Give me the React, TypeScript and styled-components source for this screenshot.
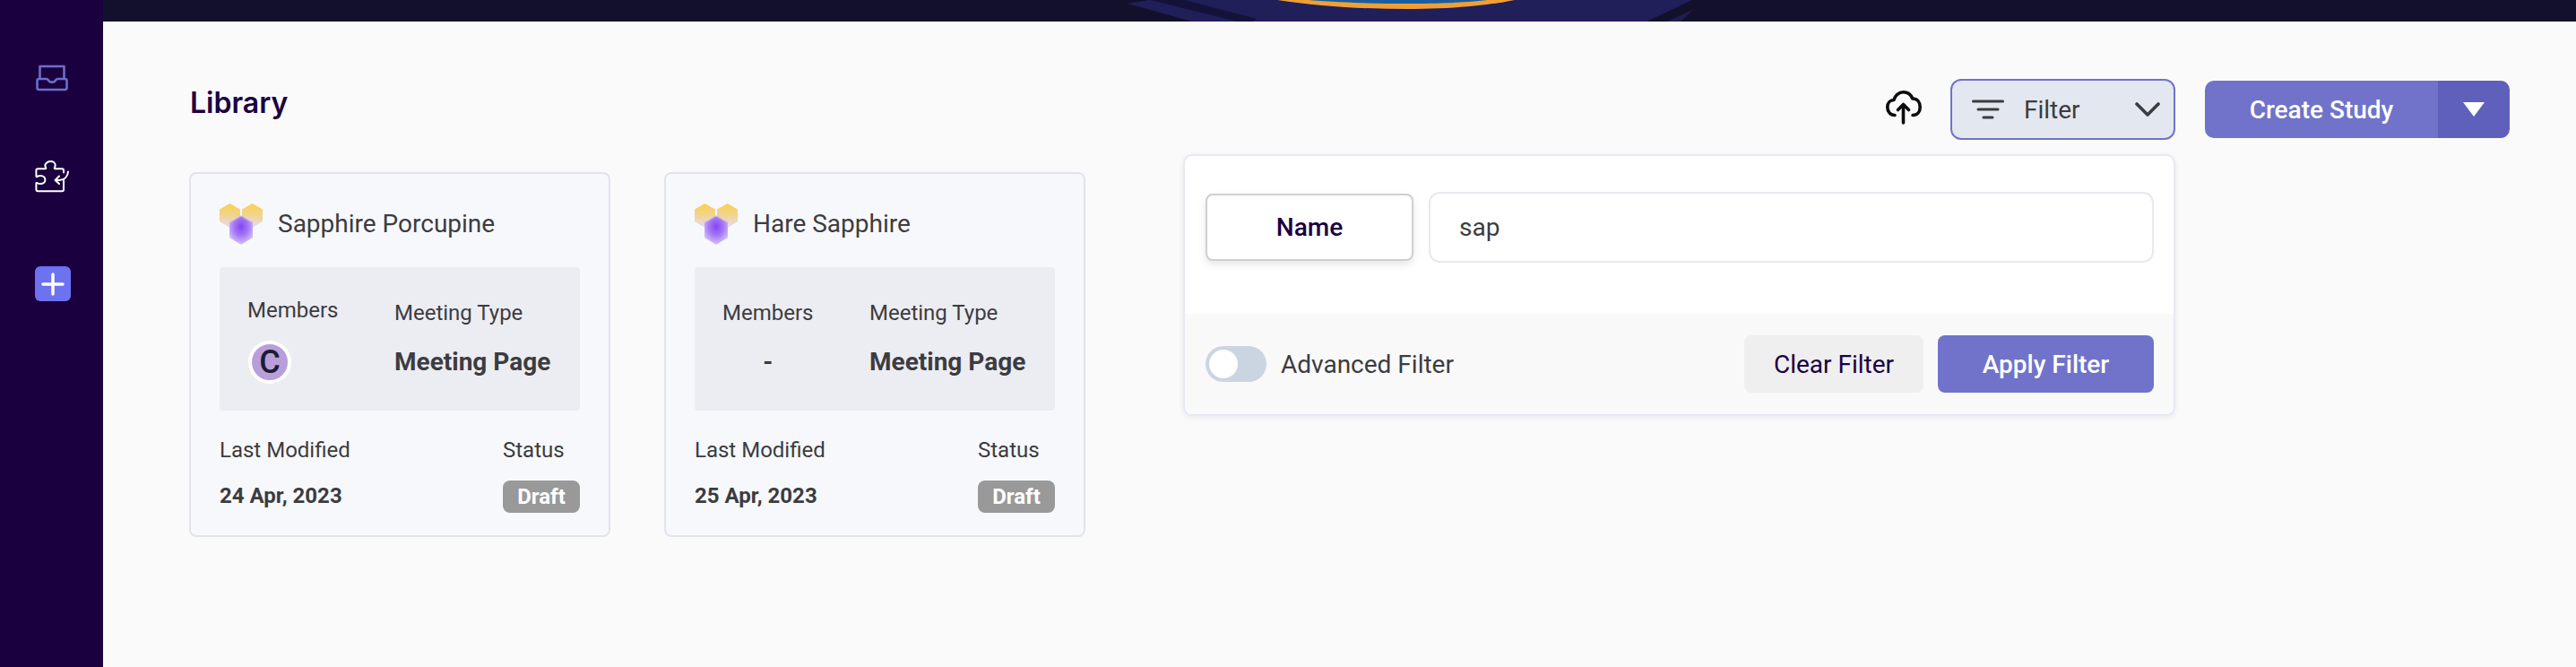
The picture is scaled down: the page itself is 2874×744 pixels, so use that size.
import React from "react";
import styled, { createGlobalStyle } from "styled-components";

const Global = createGlobalStyle`
  html, body { margin: 0; padding: 0; background: #fafafb; }
  * { box-sizing: border-box; }
  body { font-family: "Roboto", "Liberation Sans", sans-serif; color: #3c3c40; overflow: hidden; }
`;

const Page = styled.div`
  display: flex;
  width: 2874px;
  height: 744px;
  background: #fafafb;
`;

const Sidebar = styled.nav`
  flex: 0 0 115px;
  height: 744px;
  background: #1b003f;
  display: flex;
  flex-direction: column;
  align-items: center;
  padding-top: 72px;
`;

const NavItem = styled.div<{ $h: number; $mb: number }>`
  height: ${(p) => p.$h}px;
  margin-bottom: ${(p) => p.$mb}px;
  display: flex;
  align-items: center;
  justify-content: center;
`;

const PlusBox = styled.div`
  width: 40px;
  height: 39px;
  border-radius: 6px;
  background: #6c72f0;
  display: flex;
  align-items: center;
  justify-content: center;
  margin-right: -2px;
`;

const Main = styled.main`
  flex: 1;
  display: flex;
  flex-direction: column;
  min-width: 0;
`;

const Banner = styled.svg`
  display: block;
  width: 2759px;
  height: 24px;
  flex: 0 0 24px;
`;

const Content = styled.div`
  padding: 64px 74px 0 96px;
`;

const HeaderRow = styled.div`
  display: flex;
  justify-content: space-between;
  height: 68px;
`;

const Title = styled.h1`
  margin: 8px 0 0 1px;
  font-family: "Inter", "Liberation Sans", sans-serif;
  font-size: 32px;
  line-height: 38px;
  font-weight: 600;
  color: #1b0041;
`;

const Toolbar = styled.div`
  display: flex;
  align-items: center;
`;

const UploadButton = styled.div`
  width: 40px;
  height: 38px;
  margin-right: 32px;
  margin-top: -4px;
`;

const FilterWrap = styled.div`
  position: relative;
  margin-right: 33px;
`;

const FilterButton = styled.div`
  width: 251px;
  height: 68px;
  border: 2px solid #7073c9;
  border-radius: 12px;
  background: #e3e7ef;
  display: flex;
  align-items: center;
  padding: 0 15px 0 22px;
  font-size: 28px;
  color: #3c3c40;
`;

const FilterLabel = styled.span`
  flex: 1;
  margin-left: 22px;
`;

const Split = styled.div`
  display: flex;
  height: 64px;
  width: 340px;
  border-radius: 10px;
  overflow: hidden;
  color: #fff;
`;

const SplitMain = styled.div`
  flex: 1;
  background: #7073c9;
  display: flex;
  align-items: center;
  justify-content: center;
  font-size: 28px;
  font-weight: 500;
`;

const SplitCaret = styled.div`
  flex: 0 0 80px;
  background: #5e60bc;
  display: flex;
  align-items: center;
  justify-content: center;
`;

const Dropdown = styled.div`
  position: absolute;
  top: calc(100% + 16px);
  right: 0;
  width: 1107px;
  height: 292px;
  border: 2px solid #e6e9f1;
  border-radius: 10px;
  background: #fff;
  overflow: hidden;
  box-shadow: 0 2px 6px rgba(30, 40, 80, 0.08);
  display: flex;
  flex-direction: column;
`;

const DropdownBody = styled.div`
  height: 176px;
  padding: 40px 22px 0 23px;
  display: flex;
  align-items: flex-start;
  gap: 17px;
`;

const NameChip = styled.div`
  width: 232px;
  height: 75px;
  margin-top: 2px;
  border: 2px solid #cfcfd2;
  border-radius: 8px;
  background: #fff;
  box-shadow: 0 4px 10px rgba(0, 0, 0, 0.1);
  display: flex;
  align-items: center;
  justify-content: center;
  font-size: 28px;
  font-weight: 500;
  color: #1b0041;
`;

const NameField = styled.div`
  flex: 1;
  height: 79px;
  border: 2px solid #e6e9f1;
  border-radius: 12px;
  background: #fff;
  display: flex;
  align-items: center;
  padding-left: 32px;
  font-size: 28px;
  color: #3c3c40;
`;

const DropdownFooter = styled.div`
  flex: 1;
  background: #f9f9fa;
  display: flex;
  align-items: center;
  padding: 0 22px 0 23px;
`;

const ToggleTrack = styled.div`
  width: 68px;
  height: 40px;
  border-radius: 20px;
  background: #cbd5e1;
  padding: 4px;
`;

const ToggleKnob = styled.div`
  width: 32px;
  height: 32px;
  border-radius: 50%;
  background: #fff;
`;

const ToggleLabel = styled.span`
  margin-left: 16px;
  flex: 1;
  font-size: 28px;
  color: #3c3c40;
`;

const FooterButton = styled.div<{ $primary?: boolean }>`
  width: ${(p) => (p.$primary ? 241 : 200)}px;
  height: 64px;
  margin-left: ${(p) => (p.$primary ? 16 : 0)}px;
  border-radius: 8px;
  background: ${(p) => (p.$primary ? "#7073c9" : "#efeff0")};
  color: ${(p) => (p.$primary ? "#fff" : "#1b0041")};
  font-weight: ${(p) => (p.$primary ? 500 : 400)};
  display: flex;
  align-items: center;
  justify-content: center;
  font-size: 28px;
`;

const CardRow = styled.div`
  display: flex;
  gap: 60px;
  margin-top: 36px;
`;

const Card = styled.article`
  width: 470px;
  height: 407px;
  border: 2px solid #e3e4ea;
  border-radius: 8px;
  background: #f7f8fc;
  padding: 33px 32px 0;
`;

const CardHead = styled.div`
  display: flex;
  align-items: center;
  height: 46px;
  gap: 17px;
`;

const CardName = styled.div`
  font-size: 28px;
  line-height: 46px;
  color: #3c3c40;
`;

const InfoPanel = styled.div`
  margin-top: 25px;
  height: 160px;
  border-radius: 4px;
  background: #ecedf2;
  padding: 0 0 0 31px;
  display: grid;
  grid-template-columns: 164px 1fr;
`;

const InfoCol = styled.div<{ $center?: boolean }>`
  display: inline-flex;
  flex-direction: column;
  align-items: ${(p) => (p.$center ? "center" : "flex-start")};
  justify-self: start;
`;

const InfoLabel = styled.div<{ $top: number }>`
  margin-top: ${(p) => p.$top}px;
  height: 34px;
  line-height: 34px;
  font-size: 24px;
  color: #3c3c40;
`;

const InfoValue = styled.div<{ $top: number }>`
  margin-top: ${(p) => p.$top}px;
  height: 40px;
  line-height: 40px;
  font-size: 28px;
  font-weight: 700;
  color: #3c3c40;
`;

const Avatar = styled.div`
  width: 48px;
  height: 48px;
  margin-top: 17px;
  margin-left: 1px;
  border-radius: 50%;
  border: 4px solid #fff;
  background: #b99edc;
  color: #1d1d30;
  font-size: 36px;
  font-weight: 500;
  line-height: 40px;
  text-align: center;
`;

const MetaRow = styled.div`
  margin-top: 27px;
  display: flex;
  justify-content: space-between;
`;

const MetaColumn = styled.div`
  display: flex;
  flex-direction: column;
  align-items: flex-start;
`;

const MetaLabel = styled.div`
  font-size: 24px;
  line-height: 34px;
  color: #3c3c40;
`;

const MetaDate = styled.div`
  margin-top: 17px;
  font-size: 24px;
  line-height: 34px;
  font-weight: 700;
  color: #3c3c40;
`;

const Badge = styled.div`
  margin-top: 17px;
  width: 86px;
  height: 36px;
  border-radius: 8px;
  background: #999999;
  color: #fff;
  font-size: 24px;
  font-weight: 700;
  line-height: 36px;
  text-align: center;
`;

const HexLogo = ({ id }: { id: string }) => (
  <svg width="48" height="46" viewBox="0 0 48 46">
    <defs>
      <linearGradient id={`${id}-y`} x1="0" y1="0" x2="0" y2="1">
        <stop offset="0" stopColor="#fbd04e" />
        <stop offset="0.45" stopColor="#f1d48a" />
        <stop offset="1" stopColor="#e6daf5" />
      </linearGradient>
      <radialGradient id={`${id}-p`} cx="0.5" cy="0.38" r="0.65">
        <stop offset="0" stopColor="#8443f6" />
        <stop offset="0.5" stopColor="#a67bf5" />
        <stop offset="1" stopColor="#dccbf8" />
      </radialGradient>
    </defs>
    <path d="M11.5 0 23 6.5V20L11.5 27 0 20V6.5Z" fill={`url(#${id}-y)`} />
    <path d="M36.5 0 48 6.5V20L36.5 27 25 20V6.5Z" fill={`url(#${id}-y)`} />
    <path d="M24 13.5 37 21V38L24 46 11 38V21Z" fill={`url(#${id}-p)`} />
    <path d="M24 13.5 37 21 36 21.5 24 14.5 12 21.5 11 21Z" fill="#cdb6e9" />
  </svg>
);

const InboxIcon = () => (
  <svg width="36" height="30" viewBox="0 0 36 30" fill="none" stroke="#6b6fc9" strokeWidth="2.6" strokeLinejoin="round">
    <path d="M4.5 16V2h27v14" />
    <path d="M3.5 16H12c1 0 1.3.6 1.8 1.4.8 1.4 2.2 2.2 4.2 2.2s3.4-.8 4.2-2.2c.5-.8.8-1.4 1.8-1.4h8.5c1.1 0 2 .9 2 2v8c0 1.1-.9 2-2 2h-29c-1.1 0-2-.9-2-2v-8c0-1.1.9-2 2-2Z" />
  </svg>
);

const PuzzleIcon = () => (
  <svg width="38" height="36" viewBox="0 0 38 36" fill="none" stroke="#fff" strokeWidth="2" strokeLinecap="round" strokeLinejoin="round">
    <path d="M32 21v11.5c0 1-.8 1.8-1.8 1.8H3.2c-1 0-1.8-.8-1.8-1.8v-7c0-.5.5-.7 1-.5 1 .6 2.2 1.1 3.7 1.1 3.2 0 5.3-2 5.3-4.6s-2.2-4.5-5.2-4.5c-1.5 0-2.8.5-3.8 1-.5.3-1 0-1-.5V11c0-1 .8-1.8 1.8-1.8h8.3c.8 0 1-.6.6-1.3-.5-.8-.8-1.7-.8-2.7C12.3 2.7 14.5 1 17.5 1s5.2 1.7 5.2 4.2c0 1-.3 1.9-.8 2.7-.4.7-.2 1.3.6 1.3h7.7c1 0 1.8.8 1.8 1.8v2.5" />
    <path d="M37 12.5c-.3 5-3.7 9-10 9.500h-3" />
    <path d="M27 17.5 22.5 22l4.500 4" />
  </svg>
);

const UploadIcon = () => (
  <svg width="40" height="38" viewBox="0 0 40 38" fill="none" stroke="#0c0c0f" strokeWidth="3.6" strokeLinecap="round" strokeLinejoin="round">
    <path d="M10 27.5C5 27.5 1.8 23.5 1.8 18.5S5 10.5 9 10.5C10 5.5 14.5 1.8 19.5 1.8S28 4.5 29.8 9C35 9 38.2 13 38.2 18.5S35 27.5 30 27.5" />
    <path d="M19.5 36V16M13.5 21.5 19.5 15.5 25.5 21.5" />
  </svg>
);

const FilterIcon = () => (
  <svg width="36" height="22" viewBox="0 0 36 22" fill="none" stroke="#3c3c40" strokeWidth="3" strokeLinecap="round">
    <path d="M1.5 2h33M7 11h22M13 20h10" />
  </svg>
);

const Chevron = () => (
  <svg width="28" height="16" viewBox="0 0 28 16" fill="none" stroke="#3c3c40" strokeWidth="3.6" strokeLinecap="round" strokeLinejoin="round">
    <path d="M2 2 14 14 26 2" />
  </svg>
);

const Caret = () => (
  <svg width="24" height="16" viewBox="0 0 24 16" fill="#fff">
    <path d="M0 0H24L12 16Z" />
  </svg>
);

const PlusIcon = () => (
  <svg width="26" height="26" viewBox="0 0 26 26" stroke="#fff" strokeWidth="3.5" strokeLinecap="round">
    <path d="M13 2v22M2 13h22" />
  </svg>
);

const BannerArt = () => (
  <Banner viewBox="115 0 2759 24" preserveAspectRatio="none">
    <rect x="115" y="0" width="2759" height="24" fill="#13102b" />
    <path d="M1258 4 1282 0H1888L1837 24H1330Z" fill="#201f5a" />
    <path d="M1283 0H1322L1402 21 1398 24H1380Z" fill="#15123a" />
    <path d="M1860 24 1890 10 1875 24Z" fill="#201d4e" />
    <path d="M1425 0C1470 7 1520 10 1570 10S1660 6 1690 0Z" fill="#f19f33" />
    <path d="M1460 0C1500 3 1530 4 1570 4S1630 3 1660 0Z" fill="#1a5ca0" />
  </Banner>
);

type CardData = {
  id: string;
  name: string;
  date: string;
  member?: string;
};

const cards: CardData[] = [
  { id: "a", name: "Sapphire Porcupine", date: "24 Apr, 2023", member: "C" },
  { id: "b", name: "Hare Sapphire", date: "25 Apr, 2023" },
];

const StudyCard = ({ id, name, date, member }: CardData) => (
  <Card>
    <CardHead>
      <HexLogo id={id} />
      <CardName>{name}</CardName>
    </CardHead>
    <InfoPanel>
      <InfoCol $center={!member}>
        <InfoLabel $top={member ? 31 : 34}>Members</InfoLabel>
        {member ? <Avatar>{member}</Avatar> : <InfoValue $top={18}>-</InfoValue>}
      </InfoCol>
      <InfoCol>
        <InfoLabel $top={34}>Meeting Type</InfoLabel>
        <InfoValue $top={18}>Meeting Page</InfoValue>
      </InfoCol>
    </InfoPanel>
    <MetaRow>
      <MetaColumn>
        <MetaLabel>Last Modified</MetaLabel>
        <MetaDate>{date}</MetaDate>
      </MetaColumn>
      <MetaColumn>
        <MetaLabel>Status</MetaLabel>
        <Badge>Draft</Badge>
      </MetaColumn>
    </MetaRow>
  </Card>
);

export default function App() {
  return (
    <Page>
      <Global />
      <Sidebar>
        <NavItem $h={30} $mb={77}><InboxIcon /></NavItem>
        <NavItem $h={36} $mb={82}><PuzzleIcon /></NavItem>
        <PlusBox><PlusIcon /></PlusBox>
      </Sidebar>
      <Main>
        <BannerArt />
        <Content>
          <HeaderRow>
            <Title>Library</Title>
            <Toolbar>
              <UploadButton><UploadIcon /></UploadButton>
              <FilterWrap>
                <FilterButton>
                  <FilterIcon />
                  <FilterLabel>Filter</FilterLabel>
                  <Chevron />
                </FilterButton>
                <Dropdown>
                  <DropdownBody>
                    <NameChip>Name</NameChip>
                    <NameField>sap</NameField>
                  </DropdownBody>
                  <DropdownFooter>
                    <ToggleTrack><ToggleKnob /></ToggleTrack>
                    <ToggleLabel>Advanced Filter</ToggleLabel>
                    <FooterButton>Clear Filter</FooterButton>
                    <FooterButton $primary>Apply Filter</FooterButton>
                  </DropdownFooter>
                </Dropdown>
              </FilterWrap>
              <Split>
                <SplitMain>Create Study</SplitMain>
                <SplitCaret><Caret /></SplitCaret>
              </Split>
            </Toolbar>
          </HeaderRow>
          <CardRow>
            {cards.map((c) => (
              <StudyCard key={c.id} {...c} />
            ))}
          </CardRow>
        </Content>
      </Main>
    </Page>
  );
}
